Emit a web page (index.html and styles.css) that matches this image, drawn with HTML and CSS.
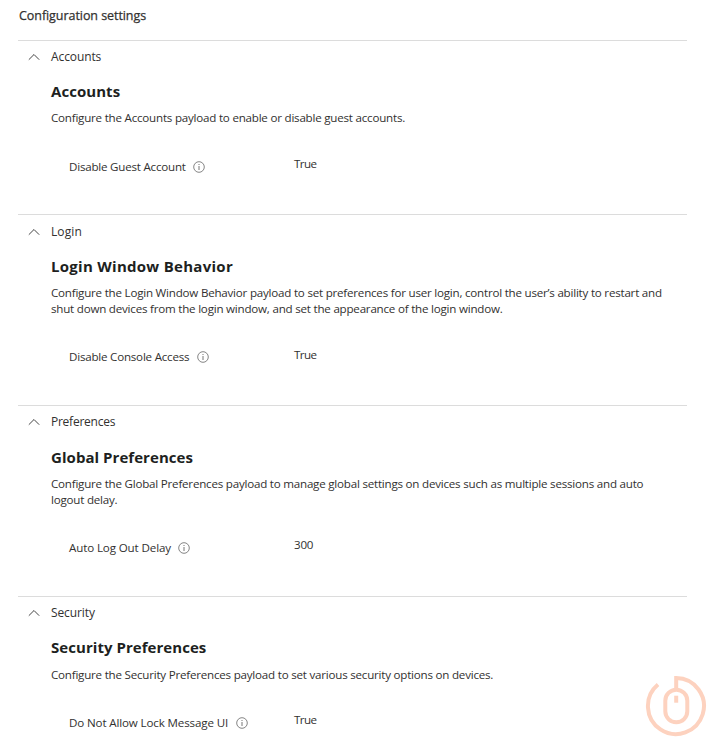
FILE: index.html
```
<!DOCTYPE html>
<html lang="en">
<head>
<meta charset="utf-8">
<title>Configuration settings</title>
<link rel="stylesheet" href="styles.css">
</head>
<body>
<svg class="defs" width="0" height="0" aria-hidden="true">
<symbol id="chevron" viewBox="0 0 12 8"><path d="M.8 6.7 6 1.5l5.2 5.2" fill="none" stroke="#444" stroke-width="1"/></symbol>
<symbol id="info" viewBox="0 0 12 12"><circle cx="6" cy="6" r="5.3" fill="none" stroke="#666" stroke-width=".8"/><path d="M6 5v4M6 3v1" fill="none" stroke="#666" stroke-width=".9"/></symbol>
</svg>
<main class="page">
<h1 class="title">Configuration settings</h1>
<section class="group">
<div class="toggle"><svg class="chevron"><use href="#chevron"/></svg><span>Accounts</span></div>
<h2 class="heading">Accounts</h2>
<p class="text">Configure the Accounts payload to enable or disable guest accounts.</p>
<div class="row"><div class="label"><span>Disable Guest Account</span><svg class="info"><use href="#info"/></svg></div><div class="value">True</div></div>
</section>
<section class="group login">
<div class="toggle"><svg class="chevron"><use href="#chevron"/></svg><span>Login</span></div>
<h2 class="heading wide">Login Window Behavior</h2>
<p class="text">Configure the Login Window Behavior payload to set preferences for user login, control the user’s ability to restart and<br>shut down devices from the login window, and set the appearance of the login window.</p>
<div class="row"><div class="label"><span>Disable Console Access</span><svg class="info"><use href="#info"/></svg></div><div class="value">True</div></div>
</section>
<section class="group preferences">
<div class="toggle"><svg class="chevron"><use href="#chevron"/></svg><span>Preferences</span></div>
<h2 class="heading">Global Preferences</h2>
<p class="text">Configure the Global Preferences payload to manage global settings on devices such as multiple sessions and auto<br>logout delay.</p>
<div class="row"><div class="label"><span>Auto Log Out Delay</span><svg class="info"><use href="#info"/></svg></div><div class="value number">300</div></div>
</section>
<section class="group security">
<div class="toggle"><svg class="chevron"><use href="#chevron"/></svg><span>Security</span></div>
<h2 class="heading">Security Preferences</h2>
<p class="text">Configure the Security Preferences payload to set various security options on devices.</p>
<div class="row"><div class="label"><span>Do Not Allow Lock Message UI</span><svg class="info"><use href="#info"/></svg></div><div class="value">True</div></div>
</section>
</main>
<svg class="mark" viewBox="0 0 64 64" aria-hidden="true"><g fill="none" stroke="#fdd2bf" stroke-width="4"><path d="M14 10.5A28 28 0 1 0 32.2 4V16"/><rect x="21.3" y="15.7" width="22" height="32.6" rx="11"/><path d="M32.2 21.7v7"/></g></svg>
</body>
</html>
```
FILE: styles.css
```
body {
  margin: 0;
  background: #fff;
  color: #323130;
  font-family: "Open Sans", "Noto Sans", sans-serif;
  font-size: 11.6px;
  letter-spacing: -0.22px;
  line-height: 16px;
}
.defs { position: absolute; }
.page {
  box-sizing: border-box;
  width: 721px;
  height: 751px;
  padding: 8px 34px 0 18px;
  overflow: hidden;
}
.title {
  margin: 0 0 16px 1px;
  font-size: 12.5px;
  font-weight: 500;
  letter-spacing: -0.06px;
  line-height: 16px;
  -webkit-text-stroke: 0.25px #323130;
}
.group {
  height: 173.4px;
  border-top: 1px solid #dcdcdc;
}
.login,
.preferences { height: 190px; }
.toggle {
  display: flex;
  align-items: center;
  height: 16px;
  margin-top: 8px;
  padding-left: 10px;
  font-size: 12px;
  letter-spacing: -0.1px;
}
.login .toggle { margin-top: 9px; letter-spacing: 0.1px; }
.preferences .toggle { letter-spacing: -0.25px; }
.chevron { width: 12px; height: 8px; margin-right: 11px; }
.heading {
  margin: 16px 0 0 33px;
  color: #201f1e;
  font-size: 15px;
  font-weight: 700;
  letter-spacing: 0.05px;
  line-height: 20px;
}
.preferences .heading { margin-top: 17px; }
.wide { letter-spacing: 0.28px; }
.text { margin: 9.2px 0 0 33px; white-space: nowrap; }
.login .text,
.preferences .text { margin-top: 8.2px; }
.row {
  display: grid;
  grid-template-columns: 225px 1fr;
  margin: 29.8px 0 0 51px;
}
.label { display: flex; align-items: center; padding-top: 3px; }
.preferences .label { letter-spacing: -0.13px; }
.security .label { letter-spacing: -0.14px; }
.info { width: 12px; height: 12px; margin-left: 7.5px; }
.value { letter-spacing: -0.6px; }
.number { letter-spacing: -0.22px; }
.login .value { padding-top: 1px; }
.mark {
  position: absolute;
  left: 644px;
  top: 674px;
  width: 64px;
  height: 64px;
}
```
